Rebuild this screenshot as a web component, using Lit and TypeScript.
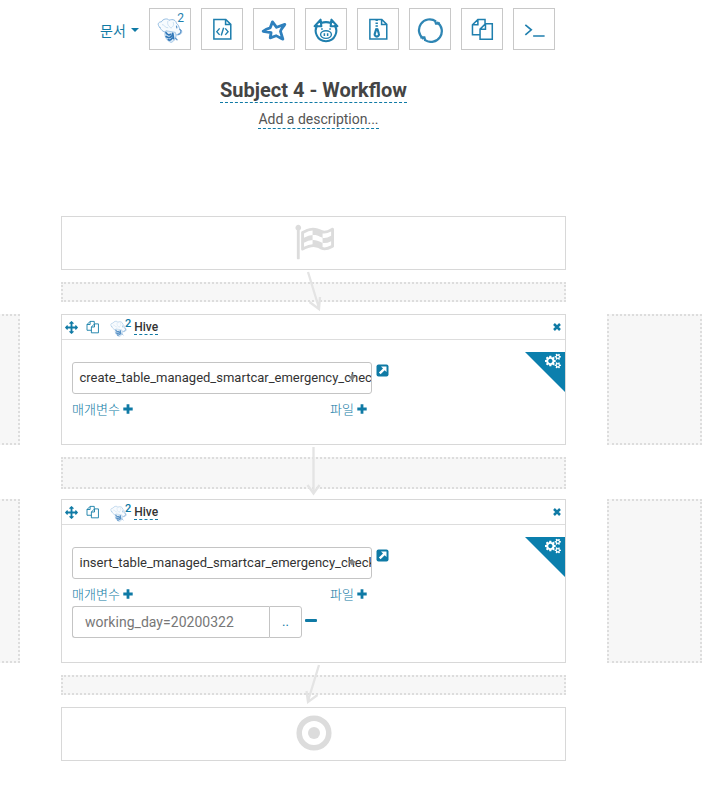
import { LitElement, html, css, svg, nothing } from "lit";
import { customElement, property } from "lit/decorators.js";

const MOVE = svg`<path fill="currentColor" d="M1792 896q0 26-19 45l-256 256q-19 19-45 19t-45-19-19-45v-128h-384v384h128q26 0 45 19t19 45-19 45l-256 256q-19 19-45 19t-45-19l-256-256q-19-19-19-45t19-45 45-19h128v-384h-384v128q0 26-19 45t-45 19-45-19l-256-256q-19-19-19-45t19-45l256-256q19-19 45-19t45 19 19 45v128h384v-384h-128q-26 0-45-19t-19-45 19-45l256-256q19-19 45-19t45 19l256 256q19 19 19 45t-19 45-45 19h-128v384h384v-128q0-26 19-45t45-19 45 19l256 256q19 19 19 45z"/>`;
const COGS = svg`<path fill="currentColor" d="M896 896q0-106-75-181t-181-75-181 75-75 181 75 181 181 75 181-75 75-181zm768 512q0-52-38-90t-90-38-90 38-38 90q0 53 37.500 90.500t90.500 37.500 90.500-37.500 37.500-90.500zm0-1024q0-52-38-90t-90-38-90 38-38 90q0 53 37.500 90.500t90.500 37.500 90.500-37.500 37.500-90.500zm-384 421v185q0 10-7 19.500t-16 10.500l-155 24q-11 35-32 76 34 48 90 115 7 11 7 20 0 12-7 19-23 30-82.500 89.500t-78.500 59.500q-11 0-21-7l-115-90q-37 19-77 31-11 108-23 155-7 24-30 24h-186q-11 0-20-7.500t-10-17.500l-23-153q-34-10-75-31l-118 89q-7 7-20 7-11 0-21-8-144-133-144-160 0-9 7-19 10-14 41-53t47-61q-23-44-35-82l-152-24q-10-1-17-9.500t-7-19.500v-185q0-10 7-19.500t16-10.500l155-24q11-35 32-76-34-48-90-115-7-11-7-20 0-12 7-20 22-30 82-89t79-59q11 0 21 7l115 90q34-18 77-32 11-108 23-154 7-24 30-24h186q11 0 20 7.500t10 17.500l23 153q34 10 75 31l118-89q8-7 20-7 11 0 21 8 144 133 144 160 0 8-7 19-12 16-42 54t-45 60q23 48 34 82l152 23q10 2 17 10.500t7 19.500zm640 533v140q0 16-149 31-12 27-30 52 51 113 51 138 0 4-4 7-122 71-124 71-8 0-46-47t-52-68q-20 2-30 2t-30-2q-14 21-52 68t-46 47q-2 0-124-71-4-3-4-7 0-25 51-138-18-25-30-52-149-15-149-31v-140q0-16 149-31 13-29 30-52-51-113-51-138 0-4 4-7 4-2 35-20t59-34 30-16q8 0 46 46.500t52 67.500q20-2 30-2t30 2q51-71 92-112l6-2q4 0 124 70 4 3 4 7 0 25-51 138 17 23 30 52 149 15 149 31zm0-1024v140q0 16-149 31-12 27-30 52 51 113 51 138 0 4-4 7-122 71-124 71-8 0-46-47t-52-68q-20 2-30 2t-30-2q-14 21-52 68t-46 47q-2 0-124-71-4-3-4-7 0-25 51-138-18-25-30-52-149-15-149-31v-140q0-16 149-31 13-29 30-52-51-113-51-138 0-4 4-7 4-2 35-20t59-34 30-16q8 0 46 46.500t52 67.500q20-2 30-2t30 2q51-71 92-112l6-2q4 0 124 70 4 3 4 7 0 25-51 138 17 23 30 52 149 15 149 31z"/>`;
const FLAG = svg`<path fill="currentColor" fill-rule="evenodd" d="M832 1000v-192q-181 16-384 117v185q205-96 384-110zm0-418v-197q-172 8-384 126v189q215-111 384-118zm832 463v-184q-235 116-384 71v-224q-20-6-39-15-5-3-33-17t-34.500-17-31.500-15-34.500-15.500-32.500-13-36-12.500-35-8.500-39.500-7.500-39.500-4-44-2q-23 0-49 3v222h19q102 0 192.500 29t197.500 82q19 9 39 15v188q42 17 91 17 120 0 293-92zm0-427v-189q-169 91-306 91-45 0-78-8v196q148 42 384-90zm-1344-362q0 35-17.500 64t-46.500 46v1266q0 14-9 23t-23 9h-64q-14 0-23-9t-9-23v-1266q-29-17-46.500-46t-17.500-64q0-53 37.500-90.500t90.500-37.500 90.500 37.500 37.500 90.500zM1792 320v763q0 39-35 57-10 5-17 9-218 116-369 116-88 0-158-35l-28-14q-64-33-99-48t-91-29-114-14q-102 0-235.500 44t-228.500 102q-15 9-33 9-16 0-32-8-32-19-32-56v-742q0-35 31-55 35-21 78.500-42.500t114-52 152.500-49.500 155-19q112 0 209 31t209 86q38 19 89 19 122 0 310-112 22-12 31-17 31-16 62 2 31 20 31 55z"/>`;

/* Toolbar glyphs share a 24-unit box. */
const BEE = svg`<g fill="none" stroke-linecap="round" stroke-linejoin="round">
  <path fill="#f7fbfe" stroke="#8fb9df" stroke-width=".9" d="M2.500 9.500C0 7 1 4.500 4 4.500 5.500 1.500 10 1 11 3c4-1.500 6.500 0 7 3 2 1 2 3 3 5 2 1 2.500 3 1 4.500-2 1.500-5 1.500-7.500-.5-2 1-4 .5-5-1.500-3 1-5-.5-7-4z"/>
  <path stroke="#c3dbf0" stroke-width=".8" d="M5 7c2 0 2 3 5 3M10 4c-1 3 1 5 3 6M15 5c1 2 0 4-2 5"/>
  <path fill="#e1eef8" stroke="#8db7de" stroke-width=".7" d="M8 13c-2 3 0 8.500 5 10.500 3-1 6-5 4-9z"/>
  <path stroke="#2f76b8" stroke-width="1.600" d="M8.300 14.500c1 2 3 2.500 4.500 1.500M8.500 18c2 1.500 3.500 1.500 5-.5M10.500 21c1.500.8 2.500.3 3.500-1.500M14.500 15l.8 5"/>
  <path stroke="#5993ca" stroke-width="1.100" d="M18 8.500l.3 1.500M21 11.500c2 1 1 4-1.500 4.500M17 19.500l1.500 1.500"/>
</g>`;
const COPY = svg`<path fill="none" stroke="currentColor" stroke-width="1.400" d="M10.200 16.400H3.200V7.200l5-5h6.600v4M8.200 2.200v5h-5M10.200 20.500h11.300V6.200h-6.300l-5 5zM15.200 6.200v5h-5"/>`;
const PAGE = svg`<path fill="none" stroke="currentColor" stroke-width="1.400" d="M4.500 2.200h11l4.600 4.600v13.600H4.500zM15.300 2.200v4.800h4.800"/>`;

const TOOLS = [
  BEE,
  svg`${PAGE}<path fill="none" stroke="currentColor" stroke-width="1.300" d="M9.800 10.500l-2.600 3 2.600 3M15 10.500l2.600 3-2.600 3M13.500 10l-2.200 7"/>`,
  svg`<path fill="none" stroke="#2f80bd" stroke-width="2.600" stroke-linejoin="round" stroke-linecap="round" d="M2 13.200c2-1.800 4-2.700 6.500-3.200L10.600 4.500l3.800 5L22 6.800c-1.200 2.400-3.900 4.200-4 6.400l2.200 7.300c-2.200-.7-4.200-2.500-6.200-3.200l-5.500 1.900.8-4.700z"/>`,
  svg`<g fill="none" stroke="currentColor" stroke-width="1.900" stroke-linejoin="round"><path d="M4.500 7.500C2.300 10 1.800 13.500 3.500 17c1.500 3.500 5 5.300 8.500 5.300s7-1.800 8.500-5.300c1.700-3.500 1.200-7-1-9.500M7.500 5.500c3-1 6-1 9 0M1.500 8.500L7 2.500l.7 6zM22.500 8.500L17 2.500l-.7 6z"/><ellipse cx="12" cy="16.200" rx="5" ry="3.500" stroke-width="1.300"/><path stroke-width="1.400" d="M10.500 15v2.500M13.500 15v2.500M7.500 11h1.500M15 11h1.500"/></g>`,
  svg`${PAGE}<path fill="none" stroke="currentColor" stroke-width="2.200" stroke-dasharray="1.300 1.300" d="M10.800 2.500v8.500"/><path fill="none" stroke="currentColor" stroke-width="2" d="M10.300 11.500L9 15.500a2 2 0 1 0 3.800 0l-1.200-4z"/>`,
  svg`<path fill="none" stroke="#2f86b4" stroke-width="2.100" d="M6 20.200A9.600 9.600 0 0 1 17.500 4M18.500 4.800A9.600 9.600 0 0 1 7.500 21.300M16.500 3l1 3h3.700M3 18.800h3.800l.8 3"/>`,
  COPY,
  svg`<path fill="none" stroke="currentColor" stroke-width="1.500" d="M4 7.200l5.500 4.600L4 16.500M11.200 17.500h10.600"/>`,
];

@customElement("workflow-action")
export class WorkflowAction extends LitElement {
  @property() document = "";
  @property() parameter = "";

  static styles = css`
    :host { display: block; box-sizing: border-box; position: relative; border: 1px solid #d8d8d8; background: #fff; color: #0f7aa5; }
    svg { display: block; flex: none; }
    .head { box-sizing: border-box; height: 25px; border-bottom: 1px solid #ddd; display: flex; align-items: center; padding: 0 4px 0 3px; }
    .copy { margin-left: 7px; }
    .bee { margin: 2px 0 0 10px; }
    .sup { font: 500 11px/11px Roboto, sans-serif; margin: -8px 3px 0 -2px; }
    .name { font: 500 12px/14px Roboto, sans-serif; color: #333; border-bottom: 1px dashed #0f7aa5; }
    .close { margin-left: auto; }
    .body { padding: 22px 0 0 10px; }
    .line { display: flex; align-items: flex-start; }
    .select { box-sizing: border-box; width: 300px; height: 32px; border: 1px solid #c4c4c4; border-radius: 3px; padding-left: 6.500px; font: 13px/30px Roboto, sans-serif; color: #333; overflow: hidden; white-space: nowrap; position: relative; }
    .chevron { position: absolute; left: 274px; top: 11px; color: #888; }
    .open { margin: 2px 0 0 4px; }
    .links { display: flex; justify-content: space-between; width: 295px; padding: 6px 0 0; height: 18px; line-height: 18px; font-family: "Noto Sans CJK KR", sans-serif; font-size: 13px; font-weight: 300; }
    .link { display: flex; align-items: center; gap: 3px; }
    .field { box-sizing: border-box; width: 197px; height: 32px; border: 1px solid #c4c4c4; border-right: 0; border-radius: 3px 0 0 3px; padding-left: 12px; font: 14px/30px Roboto, sans-serif; color: #777; letter-spacing: .03px; }
    .browse { box-sizing: border-box; width: 33px; height: 32px; border: 1px solid #c4c4c4; border-radius: 0 3px 3px 0; text-align: center; font: 13px/29px Roboto, sans-serif; }
    .params { margin-top: 3px; }
    .minus { width: 12px; height: 3px; border-radius: 1px; background: #0f7aa5; margin: 13px 0 0 3px; }
    .corner { position: absolute; top: 37px; right: 0; width: 40px; height: 40px; background: #0b7fad; clip-path: polygon(0 0, 100% 0, 100% 100%); }
    .corner svg { margin: 1px 0 0 20px; color: #fff; }
  `;

  private plus() {
    return html`<svg width="10" height="10" viewBox="0 0 10 10"><path d="M5 .3v9.400M.3 5h9.400" stroke="currentColor" stroke-width="2.800"/></svg>`;
  }

  render() {
    return html`
      <div class="head">
        <svg width="13" height="13" viewBox="0 0 1792 1792">${MOVE}</svg>
        <svg class="copy" width="15" height="15" viewBox="0 0 24 24">${COPY}</svg>
        <svg class="bee" width="17" height="17" viewBox="0 0 24 24" opacity=".8">${BEE}</svg>
        <span class="sup">2</span>
        <span class="name">Hive</span>
        <svg class="close" width="8" height="8" viewBox="0 0 8 8"><path d="M1 1l6 6M7 1l-6 6" stroke="currentColor" stroke-width="2.500"/></svg>
      </div>
      <div class="body">
        <div class="line">
          <div class="select">${this.document}
            <svg class="chevron" width="10" height="8" viewBox="0 0 10 8"><path d="M4.200 0h1.600v2H9L5 6.500 1 2h3.200z" fill="currentColor"/></svg>
          </div>
          <svg class="open" width="13" height="13" viewBox="0 0 13 13"><rect x=".5" y=".5" width="12" height="12" rx="2" fill="currentColor"/><path d="M5 2.500h5.500V8L8.700 6.200 4.600 10.300 2.900 8.600 7 4.500z" fill="#fff"/></svg>
        </div>
        <div class="links">
          <span class="link">매개변수 ${this.plus()}</span>
          <span class="link">파일 ${this.plus()}</span>
        </div>
        ${this.parameter
          ? html`<div class="line params"><div class="field">${this.parameter}</div><div class="browse">..</div><div class="minus"></div></div>`
          : nothing}
      </div>
      <div class="corner"><svg width="16" height="16" viewBox="0 0 1920 1792">${COGS}</svg></div>
    `;
  }
}

@customElement("app-root")
export class AppRoot extends LitElement {
  static styles = css`
    :host { display: block; position: relative; box-sizing: border-box; width: 717px; height: 793px; overflow: hidden; background: #fff; font-family: Roboto, sans-serif; color: #0f7aa5; }
    svg { display: block; flex: none; }
    .toolbar { display: flex; gap: 10px; padding: 8px 0 0 100px; align-items: center; height: 42px; color: #1f7fae; }
    .docs { display: flex; align-items: center; justify-content: space-between; width: 39px; font: 400 14px/20px "Noto Sans CJK KR", sans-serif; white-space: nowrap; padding-top: 1px; color: #0f7aa5; }
    .caret { border: 4px solid transparent; border-top-color: currentColor; border-bottom: 0; }
    .tool { box-sizing: border-box; width: 42px; height: 42px; border: 1px solid #c8c8c8; display: flex; align-items: center; justify-content: center; position: relative; padding-top: 2px; }
    .two { position: absolute; right: 6px; top: 2px; font-size: 12px; line-height: 14px; }
    .titles { display: flex; flex-direction: column; align-items: center; width: 627px; padding-top: 28px; height: 139px; box-sizing: border-box; margin-bottom: 27px; }
    .title { font-size: 20px; line-height: 24px; font-weight: 700; color: #444; border-bottom: 1px dashed #0f7aa5; }
    .desc { margin-top: 8px; font-size: 14px; line-height: 17px; color: #555; border-bottom: 1px dashed #0f7aa5; margin-left: 10px; }
    .flow { display: flex; flex-direction: column; gap: 12px; width: 505px; margin-left: 61px; }
    .cap { box-sizing: border-box; height: 54px; border: 1px solid #d8d8d8; display: flex; align-items: center; justify-content: center; color: #dcdcdc; padding: 0 0 2px 0; }
    .drop { box-sizing: border-box; border: 2px dotted #ddd; background: #f7f7f7; height: 20px; }
    .tall { height: 32px; margin-bottom: -2px; }
    .row { display: flex; gap: 41px; margin: 0 -136px; }
    .side { box-sizing: border-box; width: 95px; flex: none; border: 2px dotted #ddd; background: #f7f7f7; }
    .row workflow-action { width: 505px; flex: none; }
    .first { height: 131px; }
    .second { height: 164px; }
    .arrows { position: absolute; left: 0; top: 0; pointer-events: none; }
  `;

  render() {
    return html`
      <div class="toolbar">
        <div class="docs">문서<span class="caret"></span></div>
        ${TOOLS.map((icon, i) => html`<div class="tool"><svg width="26" height="26" viewBox="0 0 24 24">${icon}</svg>${i === 0 ? html`<span class="two">2</span>` : nothing}</div>`)}
      </div>
      <div class="titles">
        <div class="title">Subject 4 - Workflow</div>
        <div class="desc">Add a description...</div>
      </div>
      <div class="flow">
        <div class="cap"><svg width="40" height="40" viewBox="0 0 1792 1792">${FLAG}</svg></div>
        <div class="drop"></div>
        <div class="row first">
          <div class="side"></div>
          <workflow-action .document=${"create_table_managed_smartcar_emergency_check"}></workflow-action>
          <div class="side"></div>
        </div>
        <div class="drop tall"></div>
        <div class="row second">
          <div class="side"></div>
          <workflow-action .document=${"insert_table_managed_smartcar_emergency_check"} .parameter=${"working_day=20200322"}></workflow-action>
          <div class="side"></div>
        </div>
        <div class="drop"></div>
        <div class="cap"><svg width="36" height="36" viewBox="0 0 36 36"><circle cx="18" cy="18" r="14.800" fill="none" stroke="currentColor" stroke-width="5.500"/><circle cx="18" cy="18" r="6" fill="currentColor"/></svg></div>
      </div>
      <svg class="arrows" width="717" height="793" viewBox="0 0 717 793" fill="none" stroke="#e4e4e4" stroke-width="2.300">
        <path d="M308 272l11 36M309.500 302l9.500 7 1-12"/>
        <path d="M313.500 447v46M307.500 485l6 8.500 6-8.500"/>
        <path d="M319 665l-11 36M306.500 691l1.500 11 9.500-7"/>
      </svg>
    `;
  }
}
